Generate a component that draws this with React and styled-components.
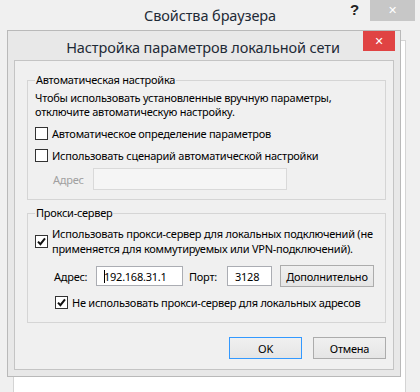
import React from 'react';
import styled, { createGlobalStyle } from 'styled-components';

// ---------------- GLOBAL ----------------
const GlobalStyle = createGlobalStyle`
  html, body {
    margin: 0;
    padding: 0;
    background: #f0f0f0;
  }
  body {
    font-family: 'Noto Sans', 'Liberation Sans', sans-serif;
    font-size: 11px;
    letter-spacing: -0.25px;
    color: #000;
  }
`;

// ---------------- SMALL PARTS ----------------
const CheckMark = () => (
  <svg width="11" height="11" viewBox="0 0 11 11">
    <path d="M2 5.6 L4.4 8.2 L9 2.4" fill="none" stroke="#111" strokeWidth="2" />
  </svg>
);

const Check = ({ checked }) => (
  <CheckBox>{checked && <CheckMark />}</CheckBox>
);

// ---------------- MAIN ----------------
export default function App() {
  return (
    <>
      <GlobalStyle />
      <Desktop>
        <OuterWindow>
          <OuterTitleBar>
            <OuterTitle>Свойства браузера</OuterTitle>
            <HelpGlyph>?</HelpGlyph>
            <CloseButton $active={false}>✕</CloseButton>
          </OuterTitleBar>
          <OuterBody>
            <WhitePanel />
          </OuterBody>
        </OuterWindow>

        <Dialog>
          <DialogTitleBar>
            <DialogTitle>Настройка параметров локальной сети</DialogTitle>
            <CloseButton $active>✕</CloseButton>
          </DialogTitleBar>

          <Client>
            <Group $bottom={9}>
              <Legend>Автоматическая настройка</Legend>
              <Note>
                Чтобы использовать установленные вручную параметры,<br />
                отключите автоматическую настройку.
              </Note>
              <CheckRow $top={7}>
                <Check />
                <span>Автоматическое определение параметров</span>
              </CheckRow>
              <CheckRow $top={7}>
                <Check />
                <span>Использовать сценарий автоматической настройки</span>
              </CheckRow>
              <FieldRow $indent={18} $top={5}>
                <FieldLabel $disabled $width={40}>Адрес</FieldLabel>
                <TextInput $disabled $width={194} $height={22} />
              </FieldRow>
            </Group>

            <Group $top={5} $bottom={12}>
              <Legend>Прокси-сервер</Legend>
              <CheckRow $top={5}>
                <Check checked />
                <span>
                  Использовать прокси-сервер для локальных подключений (не<br />
                  применяется для коммутируемых или VPN-подключений).
                </span>
              </CheckRow>
              <FieldRow $indent={19} $top={9}>
                <FieldLabel $width={42}>Адрес:</FieldLabel>
                <TextInput $width={87} $height={20}>
                  <Caret />192.168.31.1
                </TextInput>
                <FieldLabel $width={38} $gap={6}>Порт:</FieldLabel>
                <TextInput $width={45} $height={20}>3128</TextInput>
                <PushButton $width={94} $gap={8}>Дополнительно</PushButton>
              </FieldRow>
              <CheckRow $indent={20} $top={8}>
                <Check checked />
                <span>Не использовать прокси-сервер для локальных адресов</span>
              </CheckRow>
            </Group>

            <ButtonBar>
              <PushButton $width={73} $default>OK</PushButton>
              <PushButton $width={73}>Отмена</PushButton>
            </ButtonBar>
          </Client>
        </Dialog>
      </Desktop>
    </>
  );
}

// ---------------- STYLES ----------------
const Desktop = styled.div`
  position: relative;
  width: 420px;
  height: 392px;
  overflow: hidden;
  background: #f0f0f0;
`;

const OuterWindow = styled.div`
  display: flex;
  flex-direction: column;
  height: 100%;
`;

const OuterTitleBar = styled.div`
  position: relative;
  height: 31px;
  display: flex;
  justify-content: center;
  align-items: flex-start;
`;

const OuterTitle = styled.div`
  margin-top: 5px;
  font-size: 14.5px;
  letter-spacing: -0.1px;
  color: #1e2a36;
`;

const HelpGlyph = styled.div`
  position: absolute;
  right: 61px;
  top: 1px;
  font-family: 'Liberation Sans', sans-serif;
  font-weight: 700;
  font-size: 15px;
  color: #222;
`;

const CloseButton = styled.div`
  position: absolute;
  top: 0;
  right: 5px;
  width: ${p => (p.$active ? '32px' : '45px')};
  height: ${p => (p.$active ? '20px' : '21px')};
  display: flex;
  align-items: center;
  justify-content: center;
  background: ${p => (p.$active ? '#e04343' : '#c7c7c7')};
  color: #fff;
  font-family: 'DejaVu Sans', sans-serif;
  font-size: 11px;
  font-weight: 700;
`;

const OuterBody = styled.div`
  flex: 1;
  display: flex;
  padding: 9px 14px 0 13px;
`;

const WhitePanel = styled.div`
  flex: 1;
  background: #fff;
  border: 1px solid #d4d4d4;
  border-bottom: none;
`;

const Dialog = styled.div`
  position: absolute;
  left: 7px;
  top: 30px;
  width: 392px;
  height: 345px;
  display: flex;
  flex-direction: column;
  background: #e8e8e8;
  border: 1px solid #b9b9b9;
`;

const DialogTitleBar = styled.div`
  position: relative;
  height: 29px;
  flex: none;
  display: flex;
  justify-content: center;
  align-items: flex-start;
  padding-right: 2px;
`;

const DialogTitle = styled.div`
  margin-top: 6px;
  font-size: 14.5px;
  letter-spacing: -0.1px;
  color: #1e2a36;
`;

const Client = styled.div`
  flex: 1;
  margin: 0 6px 6px 6px;
  display: flex;
  flex-direction: column;
  padding: 11px 7px 0 12px;
  background: #f0f0f0;
  border: 1px solid #c4c4c4;
  white-space: nowrap;
`;

const Group = styled.fieldset`
  margin: ${p => p.$top || 0}px 0 0 0;
  padding: 0 7px ${p => p.$bottom}px 7px;
  border: 1px solid #d5d5d5;
  min-width: 0;
`;

const Legend = styled.legend`
  padding: 0 1px;
  margin-left: 0;
  line-height: 16px;
`;

const Note = styled.div`
  margin-top: 3px;
  line-height: 14px;
`;

const CheckRow = styled.label`
  display: flex;
  align-items: center;
  gap: 4px;
  margin-top: ${p => p.$top || 0}px;
  margin-left: ${p => p.$indent || 0}px;
  line-height: 15px;
`;

const CheckBox = styled.span`
  flex: none;
  width: 11px;
  height: 11px;
  display: flex;
  align-items: center;
  justify-content: center;
  background: #fff;
  border: 1px solid #333;
`;

const FieldRow = styled.div`
  display: flex;
  align-items: center;
  margin-top: ${p => p.$top || 0}px;
  margin-left: ${p => p.$indent || 0}px;
`;

const FieldLabel = styled.span`
  flex: none;
  width: ${p => p.$width}px;
  margin-left: ${p => p.$gap || 0}px;
  color: ${p => (p.$disabled ? '#a0a0a0' : '#000')};
`;

const TextInput = styled.div`
  flex: none;
  box-sizing: border-box;
  width: ${p => p.$width}px;
  height: ${p => p.$height}px;
  display: flex;
  align-items: center;
  padding-left: 7px;
  background: ${p => (p.$disabled ? '#f5f5f5' : '#fff')};
  border: 1px solid ${p => (p.$disabled ? '#d9d9d9' : '#abadb3')};
`;

const Caret = styled.span`
  width: 1px;
  height: 13px;
  margin-right: -1px;
  background: #000;
`;

const PushButton = styled.div`
  flex: none;
  box-sizing: border-box;
  width: ${p => p.$width}px;
  height: 22px;
  margin-left: ${p => p.$gap || 0}px;
  display: flex;
  align-items: center;
  justify-content: center;
  background: linear-gradient(#f0f0f0, #e5e5e5);
  border: 1px solid ${p => (p.$default ? '#3399ff' : '#acacac')};
`;

const ButtonBar = styled.div`
  display: flex;
  justify-content: flex-end;
  gap: 11px;
  margin-top: 14px;
`;
